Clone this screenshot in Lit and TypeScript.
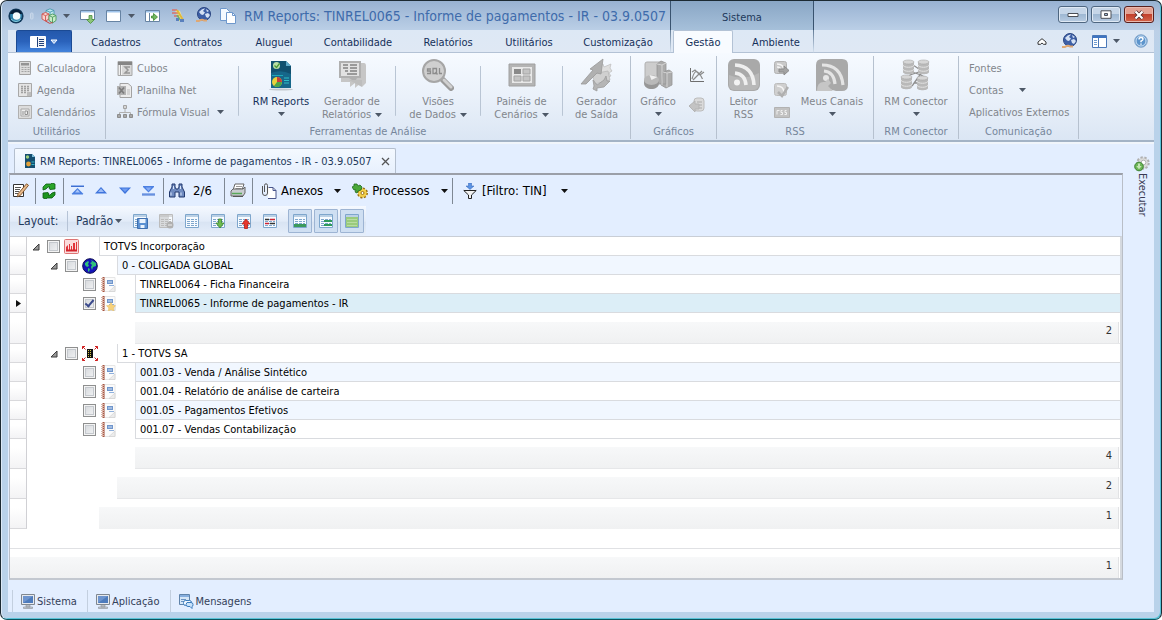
import { LitElement, html, css, svg, nothing, TemplateResult } from "lit";
import { customElement, state } from "lit/decorators.js";
import { classMap } from "lit/directives/class-map.js";

const icon = (w: number, h: number, body: unknown) =>
  html`<svg class="icon" width=${w} height=${h} viewBox="0 0 ${w} ${h}" aria-hidden="true">${body}</svg>`;

const I = {
  logo: icon(16, 16, svg`<circle cx="8" cy="8" r="7.6" fill="#123a5c"/><circle cx="8" cy="8" r="6" fill="#2f7fa8"/><path d="M2 6a6.3 6.3 0 0 1 12 0" fill="#061d38"/><circle cx="8.6" cy="8" r="3.8" fill="#f4fafc"/><path d="M3 11q5 5 10 0" stroke="#8ad0e0" fill="none"/>`),
  grip: icon(4, 8, svg`<rect x=".5" y="1" width="2.500" height="6" rx="1" fill="#b5c9e0" stroke="#c9d8ea"/>`),
  cubes: icon(16, 16, svg`<path d="M5 2.500L9 .8l4 1.700v4L9 8.200 5 6.500z" fill="#bfe6ee" stroke="#3d93a8" stroke-width=".8"/><path d="M5 2.500l4 1.700 4-1.700M9 4.200v4" stroke="#3d93a8" stroke-width=".8" fill="none"/><path d="M1 6l3.500-1.500L8 6v5l-3.500 2L1 11z" fill="#f6d2cf" stroke="#d0554e" stroke-width=".9"/><path d="M1 6l3.500 1.700L8 6M4.500 7.700V13" stroke="#d0554e" stroke-width=".9" fill="none"/><path d="M8 7.500L11.500 6 15 7.500v5l-3.500 2.500L8 12.500z" fill="#c9ebc8" stroke="#4a9a5e" stroke-width=".9"/><path d="M8 7.500l3.500 1.700L15 7.500M11.500 9.200V15" stroke="#4a9a5e" stroke-width=".9" fill="none"/><path d="M4.500 13l4 2.300 3-.8" stroke="#c8423c" fill="none"/>`),
  winDown: icon(16, 16, svg`<path d="M.5 2.500h14v9H.5z" fill="#fff" stroke="#6683a3"/><path d="M1 3h13v1.500H1z" fill="#9fc3ea"/><path d="M9 7.500h3v4h2.500L10.500 15.500 6.500 11.500H9z" fill="#8cc47a" stroke="#4a8f3c" stroke-width=".8"/>`),
  win: icon(16, 14, svg`<path d="M.5 1.500h14v11H.5z" fill="#fff" stroke="#6683a3"/><path d="M1 2h13v1.500H1z" fill="#9fc3ea"/>`),
  winPlay: icon(16, 16, svg`<path d="M.5 2.500h14v11H.5z" fill="#fff" stroke="#6683a3"/><path d="M1 3h13v1.500H1z" fill="#9fc3ea"/><path d="M4.500 5v8" stroke="#6683a3"/><path d="M6.500 8h2V5.500L12.500 9l-4 3.500V10h-2z" fill="#74b862" stroke="#3b8a30" stroke-width=".8"/>`),
  chart: icon(14, 15, svg`<path d="M4 2l5 1 4 11-5-1z" fill="#f0e59a"/><path d="M1 2h5M1 5h6M3 8h5" stroke="#d8736b" stroke-width="1.300"/><path d="M6 2l6 10" stroke="#e0b83a" stroke-width="2"/><path d="M6 7l4 6" stroke="#6fb36b" stroke-width="1.500"/><path d="M5 10h3v3H5zM9 11h4v3H9z" fill="#5a80bd"/>`),
  globe: icon(17, 17, svg`<circle cx="9" cy="7" r="6.500" fill="#3d5fa6" stroke="#2a4580"/><path d="M4 5q3-4 6-3.500L8 4l2 1.500L8 8l-2-.5zM10 7l3-1 2 2-2 3-2-1zM11 2l3 2-2 1z" fill="#d5e1f3"/><path d="M1 14h3q3-2 5-.5h3" stroke="#dfa873" stroke-width="2" fill="none"/>`),
  copy: icon(16, 16, svg`<path d="M.5.500h6l3 3v9h-9z" fill="#f5faff" stroke="#6e98cc"/><path d="M6.500 4.500h6l3 3v8h-9z" fill="#fff" stroke="#6e98cc"/><path d="M12.500 4.500v3h3" fill="none" stroke="#6e98cc"/>`),
  menu: icon(16, 12, svg`<path d="M.5.500h15v11H.5z" fill="#2c5fb0" stroke="#fff"/><path d="M1 1h6v10H1z" fill="#fff"/><path d="M7 1h8v10H7z" fill="#f3f5f8"/><path d="M7.500 1v10M9 3.500h5M9 5.500h5M9 7.500h5M9 9.500h5" stroke="#22427a"/>`),
  menuArrow: icon(8, 6, svg`<path d="M1 1h6L4 4.500z" fill="#8fb6ea" stroke="#fff"/>`),
  calc: icon(14, 14, svg`<path d="M1.500.500h11v13h-11z" fill="#dcdcdc" stroke="#a2a2a2"/><path d="M3 2h8v2.500H3z" fill="#949494"/><path d="M3.500 6.500h8M3.500 8.500h8M3.500 10.500h8" stroke="#a4a4a4" stroke-dasharray="2 1"/>`),
  agenda: icon(14, 14, svg`<path d="M.5.500h13v13H.5z" fill="#e4e4e4" stroke="#a8a8a8"/><path d="M3 3.500h8M3 5.500h8M3 7.500h8M3 9.500h6" stroke="#a0a0a0" stroke-width="1.400" stroke-dasharray="2 1"/><path d="M9 9h4v4H9z" fill="#bcbcbc"/>`),
  calendar: icon(14, 14, svg`<path d="M.5.500h13v13H.5z" fill="#dcdcdc" stroke="#b0b0b0"/><path d="M3 4h8v7H3z" fill="#efefef" stroke="#a8a8a8"/><path d="M5 6v4M7 6h2.500v3.500H7z" stroke="#8f8f8f" fill="none"/>`),
  cubos: icon(16, 15, svg`<path d="M1 .5h14v14H1z" fill="#d8d8d8" stroke="#a8a8a8"/><path d="M1 2.500h14" stroke="#858585" stroke-width="3"/><path d="M3.500 4v10" stroke="#f0f0f0" stroke-width="3"/><path d="M3.500 4v10" stroke="#a0a0a0"/><path d="M13 6H8l3 3-3 3h5" fill="none" stroke="#969696" stroke-width="1.500"/>`),
  excel: icon(16, 15, svg`<path d="M3 .5h8l3.500 3v11H3z" fill="#ececec" stroke="#a2a2a2"/><path d="M0 3h9v9H0z" fill="#b2b2b2"/><path d="M2 4.500l5 6M7 4.500l-5 6" stroke="#7c7c7c" stroke-width="1.800"/><path d="M10 7h3M10 9h3M10 11h3" stroke="#bbb"/>`),
  formula: icon(16, 14, svg`<path d="M6.500.500h3v3h-3z" fill="#d5d5d5" stroke="#a2a2a2"/><path d="M8 4v4M2.500 9V7.500h11V9" stroke="#b0b0b0" fill="none"/><path d="M.5 9.500h3v3h-3zM6.500 9.500h3v3h-3zM12.500 9.500h3v3h-3z" fill="#a8a8a8" stroke="#8d8d8d"/>`),
  reports: icon(26, 32, svg`<ellipse cx="13" cy="30.500" rx="12" ry="1" fill="#c2c8ce"/><path d="M3 2h15l5 5v22H3z" fill="#11506f"/><path d="M3 14q10-4 20 1v14H3z" fill="#16678a"/><path d="M18 2l5 5h-5z" fill="#5ea9c9"/><circle cx="8.500" cy="6.500" r="3.500" fill="#b9dea5"/><path d="M6.500 6.500l2 2 3-4" stroke="#4d9a3a" stroke-width="1.300" fill="none"/><circle cx="9" cy="23" r="5" fill="#e8d23c"/><path d="M9 23v-5a5 5 0 0 1 5 5z" fill="#c9403a"/><path d="M9 23h5a5 5 0 0 1-8 4z" fill="#4aa64a"/><path d="M4 16.500h11" stroke="#1fa8b8"/><path d="M16 19h5M16 21.500h5M16 24h5" stroke="#2ec0c6"/>`),
  gerador: icon(28, 30, svg`<path d="M3 3h23q2 0 2 3v17l-4 4V22l-7 6v-5l-5 4v-5H3z" fill="#c6c6c6"/><path d="M1 1h22v17h-4l-2 4-6-4H1z" fill="#b0b0b0"/><path d="M3 3h18v13H3z" fill="#e2e2e2"/><path d="M5 5h5M12 5h7M5 8h5M12 8h7M7 11h3M12 11h7M9 14h10" stroke="#9a9a9a" stroke-width="1.800"/><path d="M11 20h13v7z" fill="#bdbdbd"/>`),
  sql: icon(32, 32, svg`<path d="M21 21l8 8" stroke="#9b9b9b" stroke-width="6" stroke-linecap="round"/><path d="M22 21l7 7" stroke="#d0d0d0" stroke-width="3" stroke-linecap="round"/><circle cx="12" cy="12" r="11" fill="#cfcfcf" stroke="#a6a6a6" stroke-width="2"/><path d="M9 10H5.500v2H8.500v2.500H5M11 9.500h3.500v5H11zM13.500 13l2 2.500M17.500 9v5.500H20" stroke="#8c8c8c" stroke-width="1.300" fill="none"/>`),
  panels: icon(28, 24, svg`<path d="M1 1h26v22H1z" fill="#b4b4b4" stroke="#a0a0a0"/><path d="M4 4h20v16H4z" fill="#e8e8e8"/><path d="M6 6h7v5H6z" fill="#8a8a8a"/><path d="M15 6h7v5h-7zM6 13h7v5H6zM15 13h7v5h-7z" fill="#c4c4c4" stroke="#a4a4a4"/>`),
  output: icon(34, 34, svg`<path d="M14 8l9-2 1 3 7-3-1 4 2 3-3 2 2 3-14 4z" fill="#dedede" stroke="#bbb" stroke-width=".7"/><path d="M12 16l16-3 2 9-15 4z" fill="#d0d0d0" stroke="#b4b4b4" stroke-width=".7"/><path d="M23 1l-2 15-4-1L6 26H1L13 12l-3-1z" fill="#b0b0b0" stroke="#999" stroke-width=".8"/><path d="M13 22l4 5 7-5 2-4 1 5h3l-6 6-7 1v3l-4-2 1-3z" fill="#b5b5b5" stroke="#9c9c9c" stroke-width=".8"/>`),
  grafico: icon(30, 30, svg`<rect x="2" y="2" width="19" height="20" rx="2" fill="#cdcdcd" stroke="#b0b0b0"/><path d="M14 4l4-3 5 2v21h-9zM20 12l6-2 3 2v13l-6 3-5-3z" fill="#ababab" stroke="#969696" stroke-width=".8"/><path d="M14 4l5 1 4-2M19 5v20M20 12l4 1 5-1M24 13v14" stroke="#d4d4d4" fill="none"/><path d="M1 20v3c0 8 15 8 15 0v-3" fill="#979797"/><ellipse cx="8.500" cy="20" rx="7.500" ry="5" fill="#b9b9b9"/><path d="M8.500 20l-2-5 8 2z" fill="#efefef"/>`),
  curve: icon(16, 16, svg`<path d="M1.500 1v13.500H15" fill="none" stroke="#6e6e6e"/><path d="M3 12C6 1 9 3 13.500 12M3 5l3-2 5 5 4-3M4 13l9-9" fill="none" stroke="#8a8a8a" stroke-width="1.200"/>`),
  history: icon(16, 16, svg`<rect x="5" y="1" width="10" height="13" rx="3" fill="#dadada" stroke="#bcbcbc"/><path d="M8 5h5M8 8h5M8 11h5" stroke="#aaa"/><path d="M0 9l6-5v3h4v5H6v3z" fill="#c3c3c3" stroke="#b4b4b4"/>`),
  rss: icon(32, 32, svg`<rect width="32" height="32" rx="6" fill="#a9a9a9"/><path d="M1 16q15 6 30-2v12q-1 5-6 5H7q-6 0-6-6z" fill="#b8b8b8"/><path d="M7 6q18 1 19 20M7 14q10 1 11 12" fill="none" stroke="#efefef" stroke-width="3.600"/><circle cx="9" cy="23.500" r="3" fill="#f3f3f3"/>`),
  channels: icon(32, 32, svg`<path d="M6 0h20q6 0 6 6v20q0 6-6 6h-6L9 29l-9 3V6Q0 0 6 0z" fill="#a9a9a9"/><path d="M6 6q19 0 21 20M8 12q10 1 11 13" fill="none" stroke="#e4e4e4" stroke-width="3.200"/><circle cx="10" cy="19" r="3" fill="#e6e6e6"/><path d="M1 32q0-10 8-9l3-3 3 4-3 3 5 5z" fill="#c6c6c6"/>`),
  rssGo: icon(15, 15, svg`<rect x=".5" y=".5" width="12" height="12" rx="2" fill="#c9c9c9" stroke="#b2b2b2"/><path d="M3 3q7 0 7 7M3 6q4 0 4 4" stroke="#f4f4f4" fill="none" stroke-width="1.500"/><path d="M5 8h5V5l5 4.500-5 4.500v-3H5z" fill="#a3a3a3" stroke="#8c8c8c"/>`),
  rssOk: icon(15, 15, svg`<rect x=".5" y=".5" width="12" height="12" rx="2" fill="#cfcfcf" stroke="#bcbcbc"/><path d="M3 3q7 0 7 7" stroke="#f4f4f4" fill="none" stroke-width="1.500"/><path d="M4 9l4 4 6-9" stroke="#b0b0b0" stroke-width="2.500" fill="none"/>`),
  rssTag: icon(16, 11, svg`<path d="M.5.500h15v10H.5z" fill="#c2c2c2" stroke="#b2b2b2"/><path d="M5.500 3.500H3v4M8.500 3.500H7v2h1.500v2H6.500M12.500 3.500H11v2h1.500v2h-2" stroke="#f0f0f0" fill="none"/>`),
  connector: icon(32, 32, svg`<path d="M9 12l12 4 5 3M22 12L10 16l-3 4M14 24h6M13 6l6 4M12 27l10-14" stroke="#8f8f8f" stroke-width="1.300" fill="none"/>${[[3, 1], [18, 1], [1, 16], [17, 17]].map(([x, y]) => svg`<path d="M${x} ${y + 2}v10c0 3 11 3 11 0v-10z" fill="#b9b9b9"/><path d="M${x} ${y + 5}c0 3 11 3 11 0M${x} ${y + 9}c0 3 11 3 11 0" stroke="#e2e2e2" fill="none"/><ellipse cx="${x + 5.5}" cy="${y + 2}" rx="5.500" ry="2" fill="#d6d6d6" stroke="#a8a8a8" stroke-width=".6"/>`)}`),
  collapse: icon(10, 7, svg`<path d="M1 4l4-3.300L9 4v2.300H6.500L5 5 3.500 6.300H1z" fill="#fff" stroke="#222" stroke-width=".9"/>`),
  panes: icon(15, 13, svg`<path d="M.5.500h14v12H.5z" fill="#fff" stroke="#4a78b8"/><path d="M1 1h13v2H1z" fill="#3f74c0"/><path d="M6.500 3v9" stroke="#4a78b8"/><path d="M2 5.500h3M2 7.500h3M2 9.500h3" stroke="#6f9bd0"/>`),
  help: icon(14, 14, svg`<circle cx="7" cy="7" r="6.300" fill="#5c94cc" stroke="#88a9cc"/><circle cx="7" cy="7" r="5" fill="none" stroke="#cfe3f7"/><path d="M5 5.500q0-2 2-2t2 1.700q0 1-2 2v1M7 9.500v1.300" stroke="#fff" stroke-width="1.400" fill="none"/>`),
  doc: icon(12, 14, svg`<path d="M1 0h7l3 3v11H1z" fill="#164f70"/><path d="M8 0l3 3H8z" fill="#7fc1dc"/><circle cx="3.500" cy="3" r="1.700" fill="#9fd07c"/><circle cx="4.500" cy="10" r="2.400" fill="#e2a13a"/><path d="M7.500 8h3M7.500 10.500h3" stroke="#35b5c5"/>`),
  edit: icon(16, 15, svg`<path d="M.5 1.500h10v12H.5z" fill="#fff" stroke="#333"/><path d="M2 4.500h6M2 6.500h5M2 8.500h4M2 10.500h3" stroke="#555"/><path d="M13.500.800l2 1.500-8 10-3 1.500.5-3z" fill="#e8b98a" stroke="#7a4d22" stroke-width=".9"/>`),
  refresh: icon(14, 16, svg`<path d="M1 7V4l3-3h5l1-1 3 1v5l-5 .5-1-1.500 1-1H6L4 6z" fill="#2aa52a" stroke="#0b5c10" stroke-width=".8"/><path d="M13 9v3l-3 3H5l-1 1-3-1v-5l5-.5 1 1.500-1 1h2l2-2z" fill="#1c941e" stroke="#0b5c10" stroke-width=".8"/>`),
  first: icon(13, 11, svg`<path d="M0 1h13" stroke="#3f6fd0" stroke-width="2"/><path d="M0 .5h13" stroke="#8fb1ee"/><path d="M6.500 3L12 8.500v1H1v-1z" fill="#4c80e2"/><path d="M6.500 4.500L9 7.500H4z" fill="#a9c6fa"/>`),
  up: icon(12, 7, svg`<path d="M6 0l6 6.500H0z" fill="#3f74dc"/><path d="M6 1.500L9 5H3z" fill="#9dbcf6"/>`),
  down: icon(12, 7, svg`<path d="M6 7L0 .5h12z" fill="#3f74dc"/><path d="M6 5L2.500 1.500h7z" fill="#6f9bf0"/>`),
  last: icon(13, 11, svg`<path d="M1 1h11v1L6.500 7.500 1 2z" fill="#4c80e2"/><path d="M6.500 6L3.500 2.500h6z" fill="#86abf4"/><path d="M0 9.500h13" stroke="#3f6fd0" stroke-width="2"/><path d="M0 9h13" stroke="#8fb1ee"/>`),
  find: icon(16, 15, svg`<path d="M3 1h3v3l1 2h2l1-2V1h3v3l2.500 5v5H10V9H6v5H.5V9L3 4z" fill="#6f8bc0" stroke="#22396e"/><path d="M2 9.500v3M12 9.500v3M4.500 3v3M11.500 3v3" stroke="#dbe6fa"/>`),
  print: icon(16, 15, svg`<path d="M5 1h9l-2 6H3z" fill="#fff" stroke="#666"/><path d="M6 3.500h6M5.500 5.500h6" stroke="#999"/><path d="M1 8l2-2h10l2-2v6l-2 3H1z" fill="#c9ccd0" stroke="#666"/><path d="M2 10.500h10" stroke="#58a858" stroke-width="1.400"/><path d="M3 13.500h10" stroke="#555"/>`),
  clip: icon(16, 16, svg`<path d="M7 4.500h5l3 3v8H7" fill="#fff" stroke="#4a568c"/><path d="M12 4.500v3h3" fill="none" stroke="#4a568c"/><path d="M5.500 3.500h2v8h-2z" fill="#f4f4f4"/><path d="M1.500 3v7q0 2.500 2.500 2.500t2.500-2.500V2.500Q6.500.8 5 .8T3.500 2.500V9" fill="none" stroke="#555"/>`),
  process: icon(16, 16, svg`<circle cx="10.500" cy="10" r="4.500" fill="#f0c93c" stroke="#9c7412" stroke-dasharray="2 1.500" stroke-width="2"/><circle cx="10.500" cy="10" r="4" fill="#f4d04a"/><circle cx="10.500" cy="10" r="1.500" fill="#fff" stroke="#9c7412"/><path d="M0 4l2-1V1h3l1 2 2-1 2 2-1 3-3 1-1 2-2-1 1-2-2 0z" fill="#49a838" stroke="#1f6a1d" stroke-width=".8"/>`),
  filter: icon(14, 16, svg`<path d="M5.500 0h3v3H11L7 6.500 3 3h2.500z" fill="#5b93e4" stroke="#3163b4" stroke-width=".5"/><path d="M.8 7.500h12.400L8.500 12v3.500h-3V12z" fill="#f1f1f1" stroke="#222"/>`),
  close: icon(9, 9, svg`<path d="M1 1l7 7M8 1L1 8" stroke="#555" stroke-width="1.300"/>`),
  monitor: icon(14, 15, svg`<path d="M.5.500h13v10H.5z" fill="#e6e9ee" stroke="#7f8790"/><path d="M2 2h10v7H2z" fill="#6d94ce"/><path d="M2 9l10-7v7z" fill="#4d7bbc"/><path d="M5 11h4v2H5zM2.500 13h9v1.500h-9z" fill="#c8ccd2" stroke="#8a9098" stroke-width=".6"/>`),
  chat: icon(15, 15, svg`<path d="M.5.500h10v10H.5z" fill="#d5e6f7" stroke="#5f83aa"/><path d="M1 1h9v2H1z" fill="#86aede"/><path d="M2 5.500h5M2 7.500h3" stroke="#6b93c2"/><rect x="4.500" y="6.500" width="8" height="5" rx="2" fill="#f0f7ff" stroke="#3c7dbd"/><path d="M8 8.500h4q2 0 2 2t-1 2v2l-2-2H9q-2 0-2-2z" fill="#c9e2fa" stroke="#3c7dbd"/>`),
  gear: icon(16, 16, svg`<circle cx="9" cy="7" r="5.500" fill="#d3d3d3" stroke="#b0b0b0" stroke-dasharray="2.200 1.600" stroke-width="2.500"/><circle cx="9" cy="7" r="4.800" fill="#dadada"/><circle cx="9.500" cy="6.500" r="2.300" fill="#fff" stroke="#b5b5b5"/><circle cx="5" cy="10.500" r="4.300" fill="#6db556" stroke="#3b8230"/><path d="M4 7.500h2V10h1.700L5 13.300 2.300 10H4z" fill="#c4e6b4"/>`),
  company: icon(15, 15, svg`<rect x=".5" y=".5" width="14" height="14" rx="1" fill="#fbdcdc" stroke="#dd7474"/><path d="M2 12V8l2-2v6zM5 12V5h1v7zM7 12V7h1v5zM9 12V4h2v8zM12 12V3h1v9z" fill="#e2343a"/><path d="M2 11.500h11" stroke="#d2222a" stroke-width="2"/>`),
  world: icon(16, 16, svg`<circle cx="8" cy="8" r="7.300" fill="#1414b8" stroke="#0a0a50"/><path d="M3 5l3-2 1 1-1 2 1 2-2 1-2-2zM6 10l2 1-1 3-1-1zM9 2l5 3v3l-3 1-1 3-1-3 1-2-2-2 2-1z" fill="#2fc07a"/>`),
  branch: icon(16, 15, svg`<path d="M5 3h6v9H5z" fill="#111"/><path d="M6.500 4v7M8.500 4v7" stroke="#d8c84a" stroke-dasharray="1 1"/><path d="M.5 3V.5H3M.5.500l3 3M13 .5h2.500V3M15.500.500l-3 3M.5 12v2.500H3M.5 14.500l3-3M13 14.500h2.500V12M15.500 14.500l-3-3" stroke="#d02020" fill="none"/>`),
  book: (star: boolean) => icon(15, 15, svg`<path d="M3 .5h11v14H3z" fill="#fbfbfb" stroke="#e6e6e6"/><path d="M2.500 0v15" stroke="#a85440" stroke-width="2"/><path d="M0 1.500h3M0 3.500h3M0 5.500h3M0 7.500h3M0 9.500h3M0 11.500h3M0 13.500h3" stroke="#d9b5a8"/><path d="M6 3h6v4H6z" fill="#6f95cc"/><path d="M7 5h4" stroke="#d6e4f5"/><path d="M8 8.500h5" stroke="#8fb0dc"/><path d="M14 9v5.500H8z" fill="#ececec" stroke="#cfcfcf" stroke-width=".6"/>${star ? svg`<path d="M10 6.500l1.500 2.800 3 .4-2.200 2.200.5 3-2.800-1.400-2.700 1.400.5-3L5.500 9.700l3-.4z" fill="#f8d27a" stroke="#e6ba5c" stroke-width=".5"/>` : nothing}`),
  expand: icon(8, 8, svg`<path d="M7 1v6H1z" fill="#9a9a9a" stroke="#3c3c3c"/>`),
  current: icon(5, 7, svg`<path d="M0 0l5 3.500L0 7z" fill="#111"/>`),
};

const caret = html`<svg class="icon caret" width="7" height="4" viewBox="0 0 7 4" aria-hidden="true"><path d="M0 0h7L3.500 4z" fill="currentColor"/></svg>`;

const sheet = (extra: unknown, line = "#7ea6cc") =>
  icon(16, 16, svg`<path d="M1.500 1.500h13v13h-13z" fill="#f7fbff" stroke=${line}/><path d="M2 2h12v2H2z" fill=${line} opacity=".5"/><path d="M3 6.500h10M3 8.500h10M3 10.500h10M3 12.500h10" stroke=${line} stroke-dasharray="3 1"/>${extra}`);

const SHEETS: { name: string; art: TemplateResult; on?: boolean }[] = [
  { name: "Salvar layout", art: sheet(svg`<path d="M5.500 5.500h10v10h-10z" fill="#5a90d2" stroke="#3f6faf"/><path d="M7.500 6h6v4h-6zM8.500 12h4v3h-4z" fill="#eaf3fd"/>`) },
  { name: "Excluir layout", art: sheet(svg`<path d="M2 2h9v12H2z" fill="#b9b9b9" opacity=".5"/><circle cx="12" cy="12" r="3.500" fill="#b0b0b0"/><path d="M10 12h4" stroke="#eee"/>`, "#bcbcbc") },
  { name: "Editar layout", art: sheet(nothing) },
  { name: "Exportar layout", art: sheet(svg`<path d="M8.500 6h3v4H14l-4 5-4-5h2.500z" fill="#6dbb4e" stroke="#3b8430" stroke-width=".8"/>`) },
  { name: "Importar layout", art: sheet(svg`<path d="M8.500 15.500h3v-4.500H14l-4-5-4 5h2.500z" fill="#e8372c" stroke="#b02018" stroke-width=".8"/>`) },
  { name: "Agrupar", art: sheet(svg`<path d="M3 6.500h4" stroke="#333" stroke-width="1.500"/><path d="M3 10.500h4" stroke="#c23" stroke-width="1.500"/><path d="M8 10.500h5" stroke="#333" stroke-width="1.500"/><path d="M8 6.500h5" stroke="#c23" stroke-width="1.500"/>`) },
  { name: "Rodapé", on: true, art: sheet(svg`<path d="M2 11h12v3H2z" fill="#3c9a5c"/>`) },
  { name: "Rodapé do grupo", on: true, art: sheet(svg`<path d="M6 7h8v2H6zM6 11h8v2H6z" fill="#2f9a5a"/>`) },
  { name: "Linhas alternadas", on: true, art: sheet(svg`<path d="M2 4h12v10H2z" fill="#9acb7c"/><path d="M3 6.500h10M3 9.500h10M3 12.500h10" stroke="#b9dca2"/>`) },
];

type Row =
  | { kind: "node"; level: 0 | 1 | 2; text: string; art: TemplateResult; alt?: boolean; checked?: boolean; current?: boolean }
  | { kind: "total"; level: 0 | 1 | 2; value: number; gap?: boolean };

const ROWS: Row[] = [
  { kind: "node", level: 0, text: "TOTVS Incorporação", art: I.company },
  { kind: "node", level: 1, text: "0 - COLIGADA GLOBAL", art: I.world, alt: true },
  { kind: "node", level: 2, text: "TINREL0064 - Ficha Financeira", art: I.book(false) },
  { kind: "node", level: 2, text: "TINREL0065 - Informe de pagamentos - IR", art: I.book(true), checked: true, current: true },
  { kind: "total", level: 2, value: 2, gap: true },
  { kind: "node", level: 1, text: "1 - TOTVS SA", art: I.branch },
  { kind: "node", level: 2, text: "001.03 - Venda / Análise Sintético", art: I.book(false), alt: true },
  { kind: "node", level: 2, text: "001.04 - Relatório de análise de carteira", art: I.book(false) },
  { kind: "node", level: 2, text: "001.05 - Pagamentos Efetivos", art: I.book(false), alt: true },
  { kind: "node", level: 2, text: "001.07 - Vendas Contabilização", art: I.book(false) },
  { kind: "total", level: 2, value: 4 },
  { kind: "total", level: 1, value: 2 },
  { kind: "total", level: 0, value: 1 },
];

const shared = css`
  * { box-sizing: border-box; }
  button {
    font: inherit; color: inherit; background: none; border: 0; padding: 0; margin: 0;
    display: flex; align-items: center; white-space: nowrap;
  }
  .icon { display: block; flex: none; }
`;

@customElement("report-tree")
class ReportTree extends LitElement {
  static styles = [shared, css`
    :host { display: flex; flex-direction: column; flex: 1; background: #fff; border-top: 1px solid #c9ced6; border-right: 2px solid #d5d9df; }
    table { width: 100%; border-collapse: separate; border-spacing: 0; table-layout: fixed; }
    td { padding: 0; }
    .side { width: 17px; }
    .mark { height: 19px; border-right: 1px solid #d0d0d4; border-bottom: 1px solid #d9d9dc; background: linear-gradient(#fff 30%, #f3f3f5); vertical-align: middle; }
    .mark .icon { margin: 0 auto; }
    .tall { height: 30px; }
    .gap { height: 31px; }
    .line { display: grid; height: 19px; align-items: center; }
    .l0 { grid-template-columns: 20px 17px 35px 1fr; }
    .l1 { grid-template-columns: 38px 17px 35px 1fr; }
    .l2 { grid-template-columns: 56px 18px 34px 1fr; }
    .twist { justify-content: flex-end; padding-right: 7px; height: 100%; }
    input {
      appearance: none; margin: 0; width: 13px; height: 13px; border: 1px solid #8e8f8f; background: linear-gradient(135deg, #d3d6da, #f4f5f6);
      box-shadow: inset 0 0 0 1px #f4f4f4, inset 0 0 0 2px #c4c8cd; display: grid; place-content: center;
    }
    input:checked::before { content: ""; width: 3px; height: 7px; border: solid #3b4a8c; border-width: 0 2px 2px 0; transform: rotate(40deg); margin-bottom: 2px; }
    label { height: 19px; line-height: 19px; padding-left: 4px; border: solid #d9dbdf; border-width: 0 0 1px 1px; background: #fff; white-space: nowrap; overflow: hidden; color: #000; }
    .alt label { background: #f1f7ff; }
    .current label { background: #dceef7; }
    .total { display: flex; height: 30px; flex-direction: column; color: #333; }
    .total output { flex: 1; margin-top: 8px; background: linear-gradient(#f7f8f9, #f0f1f2); text-align: right; padding-right: 6px; line-height: 17px; margin-right: 1px; border-right: 1px solid #e2e3e5; }
    .t0 { margin-left: 72px; }
    .t1 { margin-left: 90px; border-bottom: 1px solid #e6e7e9; }
    .t2 { margin-left: 108px; border-bottom: 1px solid #e6e7e9; }
    .spacer { flex: 1; min-height: 19px; }
    .grand { border-top: 1px solid #e0e1e4; }
  `];

  render() {
    return html`
      <table>
        <colgroup><col class="side"><col></colgroup>
        ${ROWS.map((r, i) => r.kind === "node"
          ? html`<tr>
              <td class="mark">${r.current ? I.current : nothing}</td>
              <td><div class=${classMap({ line: true, [`l${r.level}`]: true, alt: !!r.alt, current: !!r.current })}>
                ${r.level < 2 ? html`<button class="twist" aria-label="Recolher ${r.text}">${I.expand}</button>` : html`<span></span>`}
                <input type="checkbox" id="row${i}" .checked=${!!r.checked}>
                ${r.art}
                <label for="row${i}">${r.text}</label>
              </div></td>
            </tr>`
          : html`<tr>
              <td class="mark ${r.gap ? "gap" : "tall"}"></td>
              <td><div class="total t${r.level}"><output>${r.value}</output></div></td>
            </tr>`)}
      </table>
      <div class="spacer"></div>
      <div class="total grand"><output>1</output></div>
    `;
  }
}

@customElement("app-root")
class AppRoot extends LitElement {
  @state() private tab = "Gestão";

  static styles = [shared, css`
    :host {
      display: flex; flex-direction: column; min-height: 100vh; box-sizing: border-box; overflow: hidden;
      font: 11px/13px "DejaVu Sans Condensed", "DejaVu Sans", sans-serif; color: #1e395b;
      padding: 0 7px 7px; border: 1px solid #1c2a33; border-bottom-color: #0b5560; border-radius: 7px;
      background: linear-gradient(#98b2d2, #bcd0e7 30px, #b9d2ea 60px);
      box-shadow: inset 1px 0 #dce9f6, inset -1px -1px #59c3d8;
    }
    header { display: grid; grid-template-columns: 662px 144px 1fr; height: 29px; }
    .quick { display: flex; align-items: center; }
    .quick > button { margin-right: 10px; }
    .quick .logo { margin-right: 6px; }
    .quick .grip { margin-right: 7px; }
    .quick .tight { margin-right: 6px; }
    .quick .near { margin-right: 8px; }
    h1 { margin: 0 0 0 -2px; font-size: 14px; line-height: 18px; font-weight: 400; color: #3e6bab; white-space: nowrap; }
    .context { display: grid; place-items: center; padding-top: 3px; border: solid #39536f; border-width: 0 1px; background: linear-gradient(#89a6c5, #a6c0da); }
    .caption { display: flex; justify-content: flex-end; gap: 3px; padding-top: 5px; }
    .caption button { width: 30px; height: 17px; justify-content: center; border: 1px solid #4e6680; border-radius: 3px; background: linear-gradient(#c6d6e8 45%, #9fb8d3 50%, #b8cce2); box-shadow: inset 0 0 0 1px #dfe9f4; }
    .caption .quit { background: linear-gradient(#e2a193 45%, #c2402c 50%, #d4654b); border-color: #5a1f1c; box-shadow: inset 0 0 0 1px #eab9ae; }

    nav { display: flex; height: 23px; background: linear-gradient(#dde8f5, #dfe8f4); border-bottom: 1px solid #b3c2d5; padding-left: 8px; color: #15305a; }
    .file { width: 56px; justify-content: center; gap: 4px; background: linear-gradient(#2458ab, #2a62bb 50%, #4484dc); border: 1px solid #1b4a94; border-bottom: 0; border-radius: 2px 2px 0 0; margin-right: 3px; }
    nav .tab { justify-content: center; height: 22px; padding-top: 2px; flex: none; }
    .w82 { width: 82px; } .w70 { width: 70px; } .w98 { width: 98px; } .w80 { width: 80px; } .w60 { width: 60px; } .w78 { width: 78px; }
    nav .tab.on { height: 23px; padding-top: 0; background: #f8fbff; border: 1px solid #b3c2d5; border-bottom: 0; border-radius: 2px 2px 0 0; }
    .scoped { display: flex; gap: 4px; width: 144px; margin-left: 3px; padding-left: 2px; height: 23px; border: solid; border-width: 0 1px; border-image: linear-gradient(#5d7691, #c3d2e3 80%, transparent) 1; }
    .side { margin-left: auto; display: flex; align-items: center; gap: 14px; padding-right: 6px; }
    .side .pair { gap: 6px; color: #3b4a5c; }

    .ribbon { display: flex; height: 89px; padding: 3px 0 1px; background: linear-gradient(#f6faff, #eaf1fa 50%, #dbe6f4); border-bottom: 2px solid #a3b3c6; color: #82868c; }
    .group { display: flex; flex-direction: column; border-right: 1px solid #b6c1cf; }
    .group h2 { margin: 0; font: inherit; line-height: 15px; text-align: center; color: #76869b; }
    .tools { display: flex; flex: none; height: 68px; padding-top: 1px; }
    .part { display: flex; border-right: 1px solid transparent; border-image: linear-gradient(transparent 14%, #b9c5d4 15%, #b9c5d4 86%, transparent 87%) 1; }
    .col { display: flex; flex-direction: column; }
    .col button { height: 22px; gap: 5px; }
    .big { flex-direction: column; justify-content: flex-start; text-align: center; line-height: 13px; }
    .big .art { height: 38px; display: grid; place-items: center; padding-bottom: 2px; }
    .big .caret { margin-top: 4px; }
    .big .row { display: flex; align-items: center; gap: 4px; }
    .big .row .caret { margin-top: 0; }
    .live { color: #15305a; }
    .caret { color: #4d5867; }
    .g1 { width: 98px; } .g1 .col { padding-left: 10px; }
    .g2 { width: 525px; } .g2 .col { padding-left: 11px; width: 132px; } .g2 .col button { gap: 4px; }
    .p1 { width: 157px; padding-left: 4px; } .p2 { width: 85px; } .p3 { width: 82px; } .last { width: 69px; }
    .p1, .p2, .p3 { flex: none; }
    .b76 { width: 76px; } .b66 { width: 66px; } .fill { width: 100%; }
    .g3 { width: 86px; } .g4 { width: 157px; } .g5 { width: 85px; } .g6 { width: 120px; }
    .g6 .col { padding-left: 10px; }
    .g6 .col button { gap: 16px; }
    .b54 { width: 54px; } .b53 { width: 53px; }
    .minor { padding: 0 4px; }
    .minor.pair button { height: 30px; align-items: flex-start; padding-top: 10px; }
    .wideCaret { margin-left: 3px; }

    .work { flex: 1; display: flex; background: #e3eeff; border-top: 2px solid #f0f5fb; }
    .panelWrap { flex: 1; display: flex; flex-direction: column; padding: 4px 0 0 1px; min-width: 0; }
    .docs { display: flex; padding-left: 5px; }
    .doc { display: flex; align-items: center; gap: 4px; height: 25px; padding: 0 5px 0 9px; background: linear-gradient(#f4f9ff, #e7f0fd); border: 1px solid #b4bfce; border-bottom: 0; border-radius: 2px 2px 0 0; white-space: nowrap; }
    .doc button { margin-left: 5px; }
    .panel { flex: 1; display: flex; flex-direction: column; border: solid; border-width: 2px 1px 2px; border-color: #9b9fa8 #b9bec7 #c3c8d0; }
    .bar { display: flex; align-items: center; height: 31px; font-size: 13px; color: #000; }
    .bar .cell { display: flex; align-items: center; height: 26px; border-right: 1px solid #7f8894; }
    .bar .cell:last-child { border-right: 0; }
    .bar .caret { color: #111; }
    .c1 { width: 26px; padding-left: 3px; } .c2 { width: 28px; padding-left: 6px; }
    .c3 { width: 100px; justify-content: space-between; padding: 0 8px 0 7px; }
    .c4 { width: 61px; gap: 8px; padding-left: 5px; } .c5 { width: 28px; padding-left: 5px; }
    .c6 { width: 200px; padding-left: 8px; } .c6 button { gap: 4px; }
    .c6 .caret { margin-left: 7px; } .c6 button + button { margin-left: 11px; }
    .c7 { padding-left: 10px; } .c7 button { gap: 5px; } .c7 .caret { margin-left: 9px; }
    .layout { display: flex; align-items: center; align-self: flex-start; height: 30px; width: 356px; padding-left: 8px; background: linear-gradient(#f5f9ff, #e2ebf8 50%, #d9e4f3 55%, #e6effb); }
    .layout .name { width: 50px; border-right: 1px solid #b6c3d6; height: 20px; line-height: 20px; white-space: nowrap; font-size: 12px; }
    .layout .pick { margin-left: 8px; gap: 2px; width: 51px; font-size: 12px; }
    .layout .sheet { width: 26px; height: 24px; justify-content: center; flex: none; }
    .layout .sheet.on { width: 24px; margin-left: 2px; border: 1px solid #9db4d3; background: #cfdff2; border-radius: 1px; }
    .layout .sheet:not(.on) + .on { margin-left: 5px; }
    .run { width: 31px; display: flex; padding-top: 12px; }
    .run button { writing-mode: vertical-rl; align-self: flex-start; gap: 1px; margin-left: 11px; color: #3a3a52; }
    footer { display: flex; height: 32px; padding: 10px 0 0 4px; background: #e3eeff; color: #33415a; }
    footer button { height: 22px; gap: 2px; padding: 0 10px 0 8px; border-left: 1px solid #c3cfdf; }
  `];

  private tabs: [string, string][] = [
    ["Cadastros", "w82"], ["Contratos", "w82"], ["Aluguel", "w70"], ["Contabilidade", "w98"], ["Relatórios", "w82"],
    ["Utilitários", "w80"], ["Customização", "w98"],
  ];
  private scopedTabs: [string, string][] = [["Gestão", "w60"], ["Ambiente", "w78"]];

  private big(cls: string, art: TemplateResult, first: string, second = "", drop = true) {
    return html`<button class="big ${cls}"><span class="art">${art}</span><span>${first}</span>
      ${second ? html`<span class="row">${second}${drop ? caret : nothing}</span>` : drop ? caret : nothing}</button>`;
  }

  private tabButton = ([t, w]: [string, string]) =>
    html`<button class="tab ${w} ${t === this.tab ? "on" : ""}" @click=${() => (this.tab = t)}>${t}</button>`;

  render() {
    return html`
      <header>
        <div class="quick">
          <button class="logo" aria-label="Sistema">${I.logo}</button>
          <span class="grip">${I.grip}</span>
          <button class="tight" aria-label="Cubos">${I.cubes}</button>
          <button aria-label="Mais cubos">${caret}</button>
          <button aria-label="Baixar janela">${I.winDown}</button>
          <button class="tight" aria-label="Janela">${I.win}</button>
          <button aria-label="Mais janelas">${caret}</button>
          <button aria-label="Executar">${I.winPlay}</button>
          <button aria-label="Gráficos">${I.chart}</button>
          <button class="near" aria-label="Web">${I.globe}</button>
          <button aria-label="Copiar">${I.copy}</button>
          <h1>RM Reports: TINREL0065 - Informe de pagamentos - IR - 03.9.0507</h1>
        </div>
        <div class="context">Sistema</div>
        <div class="caption">
          <button aria-label="Minimizar">${icon(12, 6, svg`<path d="M1 1.500h10v3H1z" fill="#fff" stroke="#4b4f57"/>`)}</button>
          <button aria-label="Restaurar">${icon(12, 9, svg`<path d="M1 .8h10v7.500H1z" fill="#fff" stroke="#4b4f57"/><path d="M4.500 3.500h3v2h-3z" fill="#9fb8d3" stroke="#4b4f57"/>`)}</button>
          <button class="quit" aria-label="Fechar">${icon(12, 10, svg`<path d="M2.500 1.500l7 7M9.500 1.500l-7 7" stroke="#4d2a2a" stroke-width="3.800"/><path d="M2.500 1.500l7 7M9.500 1.500l-7 7" stroke="#fff" stroke-width="2.200"/>`)}</button>
        </div>
      </header>

      <nav>
        <button class="file" aria-label="Menu">${I.menu}${I.menuArrow}</button>
        ${this.tabs.map(this.tabButton)}
        <div class="scoped">${this.scopedTabs.map(this.tabButton)}</div>
        <div class="side">
          <button aria-label="Recolher faixa">${I.collapse}</button>
          <button aria-label="Idioma">${I.globe}</button>
          <button class="pair" aria-label="Painéis">${I.panes}${caret}</button>
          <button aria-label="Ajuda">${I.help}</button>
        </div>
      </nav>

      <div class="ribbon">
        <section class="group g1">
          <div class="tools"><div class="col">
            <button>${I.calc}Calculadora</button>
            <button>${I.agenda}Agenda</button>
            <button>${I.calendar}Calendários</button>
          </div></div>
          <h2>Utilitários</h2>
        </section>
        <section class="group g2">
          <div class="tools">
            <div class="part"><div class="col">
              <button>${I.cubos}Cubos</button>
              <button>${I.excel}Planilha Net</button>
              <button>${I.formula}Fórmula Visual<span class="wideCaret">${caret}</span></button>
            </div></div>
            <div class="part p1">${this.big("b76 live", I.reports, "RM Reports")}${this.big("b66", I.gerador, "Gerador de", "Relatórios")}</div>
            <div class="part p2">${this.big("fill", I.sql, "Visões", "de Dados")}</div>
            <div class="part p3">${this.big("fill", I.panels, "Painéis de", "Cenários")}</div>
            ${this.big("last", I.output, "Gerador", "de Saída", false)}
          </div>
          <h2>Ferramentas de Análise</h2>
        </section>
        <section class="group g3">
          <div class="tools">
            ${this.big("b54", I.grafico, "Gráfico")}
            <div class="col minor pair"><button aria-label="Curvas">${I.curve}</button><button aria-label="Histórico">${I.history}</button></div>
          </div>
          <h2>Gráficos</h2>
        </section>
        <section class="group g4">
          <div class="tools">
            ${this.big("b53", I.rss, "Leitor", "RSS", false)}
            <div class="col minor"><button aria-label="Enviar">${I.rssGo}</button><button aria-label="Marcar">${I.rssOk}</button><button aria-label="Etiqueta">${I.rssTag}</button></div>
            ${this.big("b76", I.channels, "Meus Canais")}
          </div>
          <h2>RSS</h2>
        </section>
        <section class="group g5">
          <div class="tools">${this.big("fill", I.connector, "RM Conector")}</div>
          <h2>RM Conector</h2>
        </section>
        <section class="group g6">
          <div class="tools"><div class="col">
            <button>Fontes</button>
            <button>Contas${caret}</button>
            <button>Aplicativos Externos</button>
          </div></div>
          <h2>Comunicação</h2>
        </section>
      </div>

      <main class="work">
        <div class="panelWrap">
          <div class="docs">
            <div class="doc">${I.doc}<span>RM Reports: TINREL0065 - Informe de pagamentos - IR - 03.9.0507</span><button aria-label="Fechar guia">${I.close}</button></div>
          </div>
          <div class="panel">
            <div class="bar">
              <div class="cell c1"><button aria-label="Editar">${I.edit}</button></div>
              <div class="cell c2"><button aria-label="Atualizar">${I.refresh}</button></div>
              <div class="cell c3">
                <button aria-label="Primeiro">${I.first}</button><button aria-label="Anterior">${I.up}</button>
                <button aria-label="Próximo">${I.down}</button><button aria-label="Último">${I.last}</button>
              </div>
              <div class="cell c4"><button aria-label="Localizar">${I.find}</button><span>2/6</span></div>
              <div class="cell c5"><button aria-label="Imprimir">${I.print}</button></div>
              <div class="cell c6"><button>${I.clip}Anexos${caret}</button><button>${I.process}Processos${caret}</button></div>
              <div class="cell c7"><button>${I.filter}[Filtro: TIN]${caret}</button></div>
            </div>
            <div class="layout">
              <span class="name">Layout:</span>
              <button class="pick">Padrão${caret}</button>
              ${SHEETS.map(s => html`<button class="sheet ${s.on ? "on" : ""}" aria-label=${s.name}>${s.art}</button>`)}
            </div>
            <report-tree></report-tree>
          </div>
        </div>
        <aside class="run"><button>${I.gear}Executar</button></aside>
      </main>
      <footer>
        <button>${I.monitor}Sistema</button>
        <button>${I.monitor}Aplicação</button>
        <button>${I.chat}Mensagens</button>
      </footer>
    `;
  }
}
